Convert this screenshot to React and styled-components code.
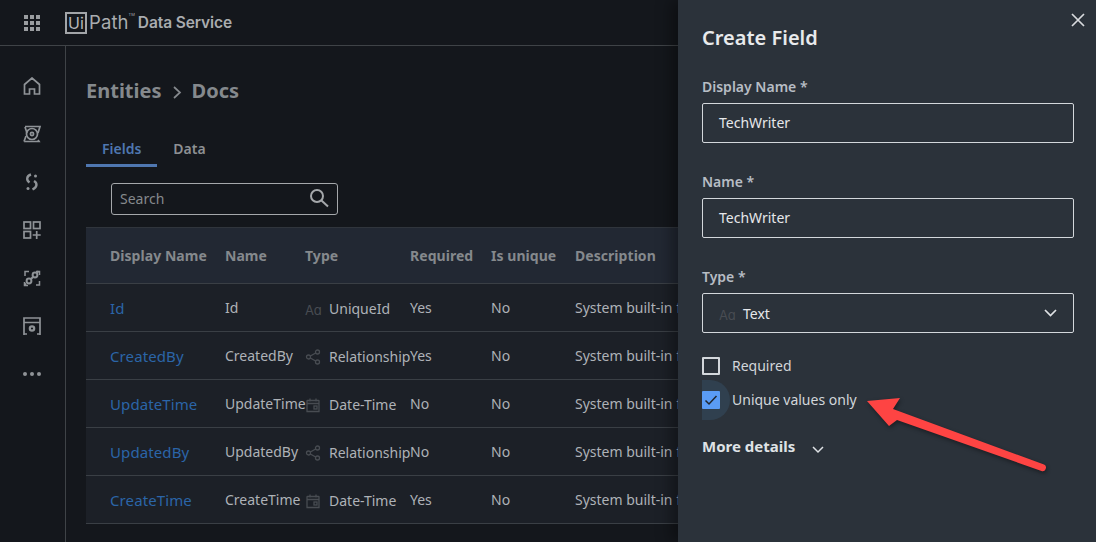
import React from "react";
import styled, { createGlobalStyle } from "styled-components";

const Global = createGlobalStyle`
  html, body { margin: 0; padding: 0; background: #14171c; }
  body { font-family: "Noto Sans", sans-serif; }
`;

const Page = styled.div`
  position: relative; width: 1096px; height: 542px; overflow: hidden;
  background: #14171c; display: flex; flex-direction: column;
`;
const Header = styled.header`
  height: 46px; box-sizing: border-box; flex: none; display: flex; align-items: center; padding-left: 24px;
  border-bottom: 1px solid #3f4347; gap: 25px;
`;
const Logo = styled.div`display: flex; align-items: center; color: #a9acaf;`;
const LogoBox = styled.span`
  width: 22px; height: 22px; box-sizing: border-box; border: 2px solid #a2a5a8;
  display: flex; align-items: center; justify-content: center;
  font: 400 16px/1 "Inter", sans-serif; color: #b5b8bb;
`;
const LogoPath = styled.span`
  font: 400 18.5px/1 "Inter", sans-serif; margin-left: 2px; color: #a9acaf; letter-spacing: .1px;
`;
const LogoTm = styled.span`font: 400 4px/1 "Inter", sans-serif; align-self: flex-start; margin-top: 1px; margin-right: 3px; color: #a9acaf;`;
const Product = styled.span`font: 600 15.5px/1 "Inter", sans-serif; color: #a9acaf; letter-spacing: -.1px;`;

const Body = styled.div`flex: 1; display: flex; min-height: 0;`;
const Sidebar = styled.nav`
  width: 66px; box-sizing: border-box; flex: none; border-right: 1px solid #3f4347;
  display: flex; flex-direction: column; align-items: center; padding: 31px 1px 0 0; gap: 30px;
`;
const SideIcon = styled.svg`
  width: 18px; height: 18px; flex: none; display: block;
  fill: none; stroke: #8f9397; stroke-width: ${p => p.$weight || 1.7};
`;
const SideDots = styled.svg`width: 18px; height: 4px; flex: none; margin-top: 7px; fill: #8f9397;`;
const Main = styled.main`flex: 1; padding: 0 0 0 20px; min-width: 0; display: flex; flex-direction: column;`;
const Crumbs = styled.h1`
  margin: 31px 0 0; height: 28px; display: flex; align-items: center; gap: 10px;
  font: 700 20px/28px "Noto Sans", sans-serif; color: #85898d;
`;
const Tabs = styled.div`display: flex; margin-top: 23px; height: 39px;`;
const Tab = styled.div`
  font: 600 14px/20px "Noto Sans", sans-serif; padding: 11px 16px 0;
  color: ${p => (p.$active ? "#4f77b0" : "#8d9093")};
  border-bottom: ${p => (p.$active ? "3px solid #4f77b0" : "3px solid transparent")};
  box-sizing: border-box; height: 39px;
`;
const SearchBox = styled.div`
  margin: 16px 0 0 25px; width: 227px; height: 32px; box-sizing: border-box;
  border: 1px solid #a5a8ab; border-radius: 3px; display: flex; align-items: center;
  justify-content: space-between; padding: 0 8px 2px; font-size: 14px; color: #85898d;
`;
const Table = styled.div`margin-top: 12px; width: 700px;`;
const Row = styled.div`
  display: grid; grid-template-columns: 115px 80px 105px 81px 84px 1fr; align-items: center;
  padding-left: 24px; box-sizing: border-box; height: ${p => (p.$head ? "57px" : "48px")};
  background: ${p => (p.$head ? "#222833" : "#1c2027")};
  border-top: ${p => (p.$head ? "1px solid #30353c" : "none")};
  border-bottom: 1px solid #3a3f45; white-space: nowrap;
`;
const HeadCell = styled.div`font: 700 14px/20px "Noto Sans", sans-serif; color: #85898d; letter-spacing: .05px;`;
const LinkCell = styled.div`font: 400 15px/20px "Noto Sans", sans-serif; color: #2b65a8; letter-spacing: .1px;`;
const Cell = styled.div`font: 400 14px/20px "Noto Sans", sans-serif; color: #aeb2b7;`;
const TypeCell = styled(Cell)`display: flex; align-items: center; position: relative; top: 1px;`;
const TypeIcon = styled.svg`
  width: 16px; height: 16px; flex: none; margin-right: 8px; fill: none; stroke: #484c52; stroke-width: 1.3;
`;
const AaMark = styled.span`
  width: 16px; flex: none; margin-right: 8px; font: 400 13px/16px "Inter", "DejaVu Sans", sans-serif; color: #484c52;
  letter-spacing: -.3px; position: relative; top: 1px;
`;

const Drawer = styled.aside`
  position: absolute; top: 0; right: 0; bottom: 0; width: 418px; box-sizing: border-box;
  background: #2b323a; box-shadow: -7px 0 14px rgba(0,0,0,.35); padding: 0 22px 0 24px;
`;
const Close = styled.svg`
  position: absolute; top: 13px; right: 11px; width: 14px; height: 14px; stroke: #d8dadd; stroke-width: 1.7; fill: none;
`;
const DrawerTitle = styled.h2`margin: 24px 0 25px; font: 600 20px/28px "Noto Sans", sans-serif; color: #e8eaec;`;
const Field = styled.div`margin-bottom: 29px;`;
const Label = styled.label`display: block; font: 600 14px/20px "Noto Sans", sans-serif; color: #b7bdc4; margin-bottom: 6px;`;
const InputBox = styled.div`
  height: 40px; box-sizing: border-box; border: 1px solid #d3d7db; border-radius: 2px;
  display: flex; align-items: center; justify-content: space-between; padding: 0 16px;
  font: 400 14px/20px "Noto Sans", sans-serif; color: #e6e8ea;
`;
const SelectValue = styled.span`display: flex; align-items: center; position: relative; top: 1px;`;
const Checks = styled.div`margin: -6px 0 0; display: flex; flex-direction: column; gap: 14px;`;
const CheckRow = styled.div`
  position: relative; display: flex; align-items: center; gap: 12px; height: 20px;
  font: 400 14px/20px "Noto Sans", sans-serif; color: #d2d6da;
`;
const Halo = styled.span`
  position: absolute; left: 0; top: -10px; width: 28px; height: 40px; background: #30404f;
  border-radius: 0 20px 20px 0;
`;
const Box = styled.span`
  position: relative; width: 18px; height: 18px; box-sizing: border-box; flex: none;
  border: ${p => (p.$on ? "none" : "2px solid #d3d7db")};
  background: ${p => (p.$on ? "#5a9cf5" : "transparent")}; border-radius: 1px;
`;
const Tick = styled.svg`position: absolute; inset: 0; width: 18px; height: 18px; fill: none; stroke: #20262d; stroke-width: 1.5;`;
const More = styled.div`
  display: flex; align-items: center; gap: 17px; margin-top: 26px;
  font: 700 15px/20px "Noto Sans", sans-serif; color: #dfe2e5;
`;
const MoreChevron = styled.svg`width: 12px; height: 8px; margin-top: 7px; fill: none; stroke: #dfe2e5; stroke-width: 1.5;`;
const Arrow = styled.svg`
  position: absolute; left: 860px; top: 390px; width: 195px; height: 90px;
  filter: drop-shadow(1px 2px 2px rgba(0,0,0,.4));
`;

const Aa = () => <AaMark>Aɑ</AaMark>;
const ShareIcon = () => (
  <TypeIcon viewBox="0 0 16 16">
    <circle cx="3.5" cy="8" r="2" /><circle cx="12.5" cy="3" r="2" /><circle cx="12.5" cy="13" r="2" />
    <path d="M5.3 7 10.7 4M5.3 9l5.4 3" />
  </TypeIcon>
);
const CalIcon = () => (
  <TypeIcon viewBox="0 0 16 16">
    <path d="M2.5 3.5h11a.5.5 0 0 1 .5.5v10.500H2V4a.5.5 0 0 1 .5-.5ZM2 6.500h12M5 1.500v3M11 1.500v3" />
    <rect x="9" y="9" width="3" height="3" />
  </TypeIcon>
);

const rows = [
  ["Id", "Id", "aa", "UniqueId", "Yes"],
  ["CreatedBy", "CreatedBy", "share", "Relationship", "Yes"],
  ["UpdateTime", "UpdateTime", "cal", "Date-Time", "No"],
  ["UpdatedBy", "UpdatedBy", "share", "Relationship", "No"],
  ["CreateTime", "CreateTime", "cal", "Date-Time", "Yes"],
];
const typeIcons = { aa: <Aa />, share: <ShareIcon />, cal: <CalIcon /> };

export default function App() {
  return (
    <Page>
      <Global />
      <Header>
        <svg width="16" height="16" viewBox="0 0 16 16" fill="#9a9da0" style={{ flex: "none" }}>
          {[0, 6, 12].flatMap(y => [0, 6, 12].map(x => <rect key={`${x}-${y}`} x={x} y={y} width="4" height="4" />))}
        </svg>
        <Logo>
          <LogoBox>Ui</LogoBox>
          <LogoPath>Path</LogoPath>
          <LogoTm>TM</LogoTm>
          <Product>Data Service</Product>
        </Logo>
      </Header>
      <Body>
        <Sidebar>
          <SideIcon viewBox="0 0 18 18"><path d="M1.500 17V7.500L9 1l7.500 6.500V17h-5v-5h-5v5Z" /></SideIcon>
          <SideIcon viewBox="0 0 18 18">
            <circle cx="9" cy="9" r="5.500" /><circle cx="9" cy="9" r="1.600" />
            <path d="M2 1.500h15L15 8M1 16.500h15L15 15M2 2l2 6M3 11l-2 5.500" />
          </SideIcon>
          <SideIcon viewBox="0 0 18 18" $weight={2.4}>
            <path d="M8 1.500C3.500 3 3 7 6.500 9.500M11 8c3.500 2 3.500 6 -1.500 8.500" />
            <circle cx="12.500" cy="3" r="1.500" fill="#8f9397" stroke="none" /><circle cx="5" cy="15.500" r="1.500" fill="#8f9397" stroke="none" />
          </SideIcon>
          <SideIcon viewBox="0 0 18 18">
            <rect x="1" y="1" width="6.500" height="6.500" /><rect x="10.500" y="1" width="6.500" height="6.500" /><rect x="1" y="10.500" width="6.500" height="6.500" />
            <path d="M13.700 10v8M9.700 14h8" />
          </SideIcon>
          <SideIcon viewBox="0 0 18 18" $weight={1.500}>
            <path d="M2 7V2.500h4M13 2.500h3.500V6M16.500 12v4H13M5 16.500H1.500V13" />
            <circle cx="6" cy="12" r="2.400" strokeWidth="2" /><circle cx="12" cy="6" r="2.400" strokeWidth="2" />
            <path d="M8 10l2-2M14 4l1.500-2M3 14.500 1.500 16" strokeWidth="2" />
          </SideIcon>
          <SideIcon viewBox="0 0 18 18">
            <path d="M1 18V1h16v17M1 5.500h16M1 17h3M14 17h3" />
            <circle cx="9" cy="11.500" r="2.200" strokeWidth="2.200" />
          </SideIcon>
          <SideDots viewBox="0 0 18 4">
            <circle cx="2" cy="2" r="2" /><circle cx="9" cy="2" r="2" /><circle cx="16" cy="2" r="2" />
          </SideDots>
        </Sidebar>
        <Main>
          <Crumbs>
            <span>Entities</span>
            <svg width="10" height="14" viewBox="0 0 10 14" fill="none" stroke="#85898d" strokeWidth="1.700" style={{ marginTop: 2 }}><path d="M2 2l6 5.500L2 13" /></svg>
            <span>Docs</span>
          </Crumbs>
          <Tabs>
            <Tab $active>Fields</Tab>
            <Tab>Data</Tab>
          </Tabs>
          <SearchBox>
            Search
            <svg width="20" height="20" viewBox="0 0 20 20" fill="none" stroke="#a5a8ab" strokeWidth="2"><circle cx="8" cy="8" r="6" /><path d="M12.500 12.500 19 18.500" /></svg>
          </SearchBox>
          <Table>
            <Row $head>
              <HeadCell>Display Name</HeadCell><HeadCell>Name</HeadCell><HeadCell>Type</HeadCell>
              <HeadCell>Required</HeadCell><HeadCell>Is unique</HeadCell><HeadCell>Description</HeadCell>
            </Row>
            {rows.map(r => (
              <Row key={r[0]}>
                <LinkCell>{r[0]}</LinkCell>
                <Cell>{r[1]}</Cell>
                <TypeCell>{typeIcons[r[2]]}{r[3]}</TypeCell>
                <Cell>{r[4]}</Cell>
                <Cell>No</Cell>
                <Cell>System built-in field</Cell>
              </Row>
            ))}
          </Table>
        </Main>
      </Body>
      <Drawer>
        <Close viewBox="0 0 14 14"><path d="M1 1l12 12M13 1 1 13" /></Close>
        <DrawerTitle>Create Field</DrawerTitle>
        <Field>
          <Label>Display Name *</Label>
          <InputBox>TechWriter</InputBox>
        </Field>
        <Field>
          <Label>Name *</Label>
          <InputBox>TechWriter</InputBox>
        </Field>
        <Field>
          <Label>Type *</Label>
          <InputBox>
            <SelectValue><Aa />Text</SelectValue>
            <svg width="13" height="8" viewBox="0 0 13 8" fill="none" stroke="#dfe2e5" strokeWidth="1.700"><path d="M1 1l5.500 5.500L12 1" /></svg>
          </InputBox>
        </Field>
        <Checks>
          <CheckRow><Box />Required</CheckRow>
          <CheckRow>
            <Halo />
            <Box $on><Tick viewBox="0 0 18 18"><path d="M3.500 9.500 7 13l7.500-8" /></Tick></Box>
            Unique values only
          </CheckRow>
        </Checks>
        <More>
          More details
          <MoreChevron viewBox="0 0 12 8"><path d="M1 1l5 5 5-5" /></MoreChevron>
        </More>
      </Drawer>
      <Arrow viewBox="860 390 195 90">
        <path d="M867 401 900 398 893 409 1044 464.500a3.500 3.500 0 0 1-2.500 6.500L897 420 889 426Z" fill="#fe4443" />
      </Arrow>
    </Page>
  );
}
